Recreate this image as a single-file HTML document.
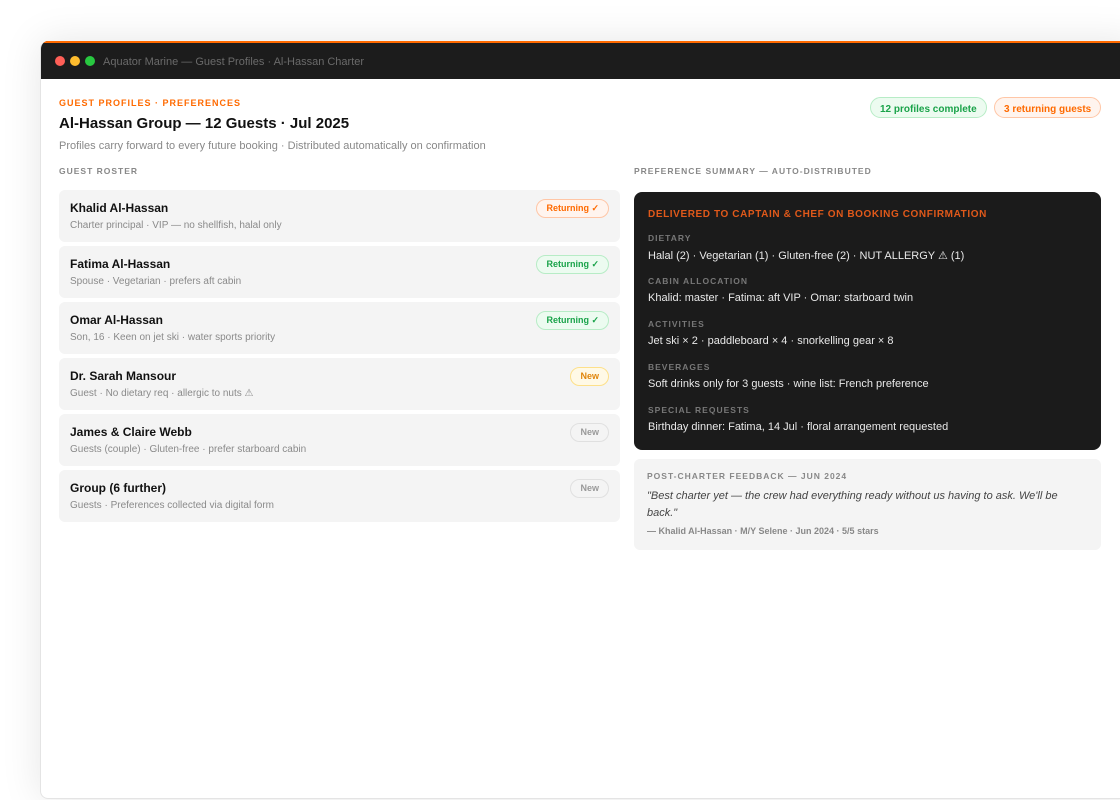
<!DOCTYPE html>
<html><head><meta charset="utf-8"><style>
*{margin:0;padding:0;box-sizing:border-box}
body{width:1120px;height:800px;background:#fff;font-family:"Liberation Sans",sans-serif;position:relative;overflow:hidden}
.win{position:absolute;left:40px;top:41px;width:1100px;height:758px;border-radius:8px 0 0 8px;background:#fff;box-shadow:0 0 40px rgba(0,0,0,.10);overflow:hidden;border:1px solid #e4e4e4;border-top:none}
.tb{position:absolute;left:0;top:0;right:0;height:38px;background:#1c1c1c;border-top:2px solid #ff6a00}
.dot{position:absolute;top:13px;width:10px;height:10px;border-radius:50%}
.tt{position:absolute;left:62px;top:13px;font-size:11px;color:#6a6a6a}
.a{position:absolute;white-space:nowrap}
.eyebrow{font-size:9px;font-weight:bold;letter-spacing:1px;color:#ff6a00}
.h1{font-size:15px;font-weight:bold;color:#111}
.sub{font-size:11px;color:#888}
.lbl{font-size:8.5px;font-weight:bold;letter-spacing:1px;color:#888}
.pill{position:absolute;height:21px;border-radius:11px;font-size:10px;font-weight:bold;line-height:21px;padding:1px 9px 0}
.row{position:absolute;left:18px;width:561px;height:52px;background:#f4f4f4;border-radius:6px}
.row .n{position:absolute;left:11px;top:11px;font-size:12px;font-weight:bold;color:#111}
.row .d{position:absolute;left:11px;top:30px;font-size:10px;color:#8a8a8a}
.bd{position:absolute;right:11px;top:9px;height:19px;border-radius:10px;font-size:9px;font-weight:bold;line-height:17px;padding:0 9px}
.ret{background:#fff4ee;border:1px solid #ffc6a6;color:#ff6a00}
.grn{background:#ecfbf0;border:1px solid #b7ecc6;color:#1aa34a}
.yel{background:#fff9e6;border:1px solid #fde08a;color:#e0850b}
.gry{background:#f4f4f4;border:1px solid #e0e0e0;color:#999}
.dark{position:absolute;left:593px;top:151px;width:467px;height:258px;background:#1b1b1b;border-radius:8px}
.dark .k{position:absolute;left:14px;font-size:8.5px;font-weight:bold;letter-spacing:1px;color:#777}
.dark .v{position:absolute;left:14px;font-size:11px;color:#e8e8e8}
.fb{position:absolute;left:593px;top:418px;width:467px;height:91px;background:#f4f4f4;border-radius:6px}
</style></head><body>
<div class="win">
 <div class="tb">
  <div class="dot" style="left:14px;background:#ff5f57"></div>
  <div class="dot" style="left:29px;background:#febc2e"></div>
  <div class="dot" style="left:44px;background:#28c840"></div>
  <div class="tt">Aquator Marine — Guest Profiles · Al-Hassan Charter</div>
 </div>
 <div class="a eyebrow" style="left:18px;top:57px">GUEST PROFILES · PREFERENCES</div>
 <div class="a h1" style="left:18px;top:74px">Al-Hassan Group — 12 Guests · Jul 2025</div>
 <div class="a sub" style="left:18px;top:99px">Profiles carry forward to every future booking · Distributed automatically on confirmation</div>
 <div class="pill grn" style="left:829px;top:56px">12 profiles complete</div>
 <div class="pill ret" style="left:953px;top:56px">3 returning guests</div>
 <div class="a lbl" style="left:18px;top:125px">GUEST ROSTER</div>
 <div class="a lbl" style="left:593px;top:125px">PREFERENCE SUMMARY — AUTO-DISTRIBUTED</div>

 <div class="row" style="top:149px"><div class="n">Khalid Al-Hassan</div><div class="d">Charter principal · VIP — no shellfish, halal only</div><div class="bd ret">Returning ✓</div></div>
 <div class="row" style="top:205px"><div class="n">Fatima Al-Hassan</div><div class="d">Spouse · Vegetarian · prefers aft cabin</div><div class="bd grn">Returning ✓</div></div>
 <div class="row" style="top:261px"><div class="n">Omar Al-Hassan</div><div class="d">Son, 16 · Keen on jet ski · water sports priority</div><div class="bd grn">Returning ✓</div></div>
 <div class="row" style="top:317px"><div class="n">Dr. Sarah Mansour</div><div class="d">Guest · No dietary req · allergic to nuts ⚠</div><div class="bd yel">New</div></div>
 <div class="row" style="top:373px"><div class="n">James &amp; Claire Webb</div><div class="d">Guests (couple) · Gluten-free · prefer starboard cabin</div><div class="bd gry">New</div></div>
 <div class="row" style="top:429px"><div class="n">Group (6 further)</div><div class="d">Guests · Preferences collected via digital form</div><div class="bd gry">New</div></div>

 <div class="dark">
  <div class="a" style="left:14px;top:17px;font-size:10px;font-weight:bold;letter-spacing:.6px;color:#e0591a">DELIVERED TO CAPTAIN &amp; CHEF ON BOOKING CONFIRMATION</div>
  <div class="k" style="top:41px">DIETARY</div>
  <div class="v" style="top:57px">Halal (2) · Vegetarian (1) · Gluten-free (2) · NUT ALLERGY ⚠ (1)</div>
  <div class="k" style="top:84px">CABIN ALLOCATION</div>
  <div class="v" style="top:100px">Khalid: master · Fatima: aft VIP · Omar: starboard twin</div>
  <div class="k" style="top:127px">ACTIVITIES</div>
  <div class="v" style="top:143px">Jet ski × 2 · paddleboard × 4 · snorkelling gear × 8</div>
  <div class="k" style="top:170px">BEVERAGES</div>
  <div class="v" style="top:186px">Soft drinks only for 3 guests · wine list: French preference</div>
  <div class="k" style="top:213px">SPECIAL REQUESTS</div>
  <div class="v" style="top:229px">Birthday dinner: Fatima, 14 Jul · floral arrangement requested</div>
 </div>
 <div class="fb">
  <div class="a lbl" style="left:13px;top:12px">POST-CHARTER FEEDBACK — JUN 2024</div>
  <div style="position:absolute;left:13px;top:29px;width:430px;font-size:11px;line-height:17px;font-style:italic;color:#444">"Best charter yet — the crew had everything ready without us having to ask. We'll be back."</div>
  <div class="a" style="left:13px;top:67px;font-size:9px;font-weight:bold;color:#888">— Khalid Al-Hassan · M/Y Selene · Jun 2024 · 5/5 stars</div>
 </div>
</div>
</body></html>
